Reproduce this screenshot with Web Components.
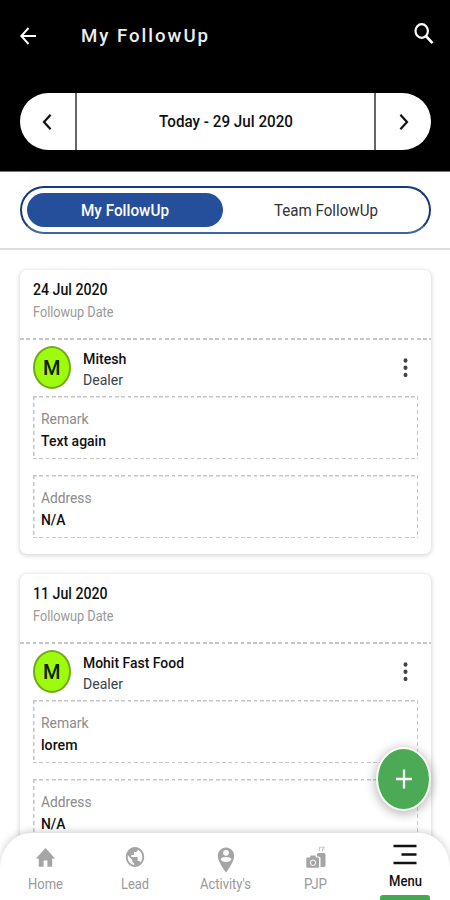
<!DOCTYPE html>
<html lang="en">
<head>
<meta charset="utf-8">
<title>My FollowUp</title>
<style>
html,body{margin:0;height:900px;overflow:hidden;background:#fff}
body{font-family:Roboto,"Liberation Sans",sans-serif;color:#111}
</style>
</head>
<body>
<follow-app></follow-app>
<script>
const define = (name, html, setup) => customElements.define(name, class extends HTMLElement {
  connectedCallback() {
    if (this.shadowRoot) return;
    const t = document.createElement('template');
    t.innerHTML = typeof html === 'function' ? html(this) : html;
    this.attachShadow({ mode: 'open' }).append(t.content.cloneNode(true));
    if (setup) setup(this);
  }
});

// Text condensed horizontally to occupy the width given in "w".
define('fit-text', el => `
<style>
:host{display:block;flex:none;width:${el.getAttribute('w')}px;height:20px;line-height:20px;white-space:nowrap;font-size:16px}
span{display:inline-block;transform-origin:0 50%}
</style><span>${el.getAttribute('text')}</span>`, el => {
  const s = el.shadowRoot.querySelector('span');
  s.style.transform = `scaleX(${parseFloat(el.getAttribute('w')) / s.getBoundingClientRect().width})`;
});

define('app-header', `
<style>
:host{display:flex;flex-direction:column;height:171px;background:#000;color:#fff;border-bottom:1px solid #777;box-sizing:content-box}
.bar{display:flex;align-items:center;height:72px;padding:0 15px 0 19px;box-sizing:border-box}
.bar fit-text{font-size:19px;font-weight:500;letter-spacing:2px;margin-left:43px;color:#eee}
.search{margin-left:auto;margin-top:-5px}
svg{display:block;flex:none}
.bar svg:first-child{margin-top:-1px}
.pill{display:flex;align-items:center;margin:21px 19px 0 20px;height:57px;border-radius:29px;background:#fff;color:#111}
.side{width:55px;display:flex;justify-content:center}
.side:first-child svg{margin-right:1px}
.mid{flex:1;height:100%;display:flex;align-items:center;justify-content:center;border-left:2px solid #666;border-right:2px solid #666}
.mid fit-text{font-size:16.5px;font-weight:500;margin-top:1px}
</style>
<div class="bar">
 <svg width="19" height="20" viewBox="0 0 19 20" fill="none" stroke="#fff" stroke-width="1.9"><path d="M17 10H2.5M9.5 2 2.3 10l7.2 8"/></svg>
 <fit-text w="129" text="My FollowUp"></fit-text>
 <svg class="search" width="22" height="24" viewBox="0 0 22 24" fill="none" stroke="#fff"><ellipse cx="8.7" cy="9" rx="6.2" ry="6.8" stroke-width="2.2"/><path d="m13.2 14.3 6.4 6.900" stroke-width="2.7"/></svg>
</div>
<div class="pill">
 <div class="side"><svg width="10" height="18" viewBox="0 0 10 18" fill="none" stroke="#111" stroke-width="2.2"><path d="M8.6 1.800 2 9l6.600 7.200"/></svg></div>
 <div class="mid"><fit-text w="134" text="Today - 29 Jul 2020"></fit-text></div>
 <div class="side"><svg width="10" height="18" viewBox="0 0 10 18" fill="none" stroke="#111" stroke-width="2.2"><path d="m1.400 1.800 6.600 7.200-6.600 7.200"/></svg></div>
</div>`);

define('view-tabs', `
<style>
:host{display:block;padding:14px 19px 14px 20px;border-bottom:2px solid #dedede;height:48px}
.tabs{display:flex;box-sizing:border-box;height:48px;border:2px solid #14397f;border-bottom-color:#3d65a3;border-radius:24px;padding:5px}
.tab{flex:1;display:flex;align-items:center;justify-content:center;border-radius:17px;color:#333;padding-top:1px}
.tab.on{flex:0 0 196px;background:#254f9a;color:#fff;font-weight:500}
.tab:last-child{padding-left:5px}
</style>
<div class="tabs"><div class="tab on"><fit-text w="88" text="My FollowUp"></fit-text></div><div class="tab"><fit-text w="104" text="Team FollowUp"></fit-text></div></div>`);

define('info-box', `
<style>
:host{display:block;box-sizing:border-box;height:63px;padding:13px 0 0 7.500px;margin:0 13px 16px}
:host{background:
 repeating-linear-gradient(90deg,#c6c6c6 0 3.8px,transparent 3.8px 6.3px) 0 0/100% 1.5px no-repeat,
 repeating-linear-gradient(90deg,#c6c6c6 0 3.8px,transparent 3.8px 6.3px) 0 100%/100% 1.5px no-repeat,
 repeating-linear-gradient(180deg,#c6c6c6 0 4px,transparent 4px 7px) 0 0/1.5px 100% no-repeat,
 repeating-linear-gradient(180deg,#c6c6c6 0 4px,transparent 4px 7px) 100% 0/1.5px 100% no-repeat}
::slotted(.k){font-size:15.5px!important;color:#8b8b8b;margin-bottom:2px}
::slotted(.v){font-size:15.5px!important;color:#111;font-weight:500}
</style><slot></slot>`);

define('follow-card', el => {
  const [date, name, nw, remark, rw] = el.getAttribute('data').split('|');
  return `
<style>
:host{display:block;flex:none;box-sizing:border-box;height:284px;border-radius:7px;background:#fff;box-shadow:0 1px 4px 1px rgba(0,0,0,.15)}
.date{height:68px;box-sizing:border-box;padding:10px 13px 0 12.500px}
.date .d{font-weight:500}
.date .l{font-size:14.5px;color:#999;margin-top:3px}
.rule{height:1.5px;background:repeating-linear-gradient(90deg,#c6c6c6 0 3.8px,transparent 3.8px 6.3px)}
.person{display:flex;height:56.5px;padding:0 22px 0 13px}
.avatar{width:38px;height:43px;margin-top:6.5px;box-sizing:border-box;border:2px solid #73aa1d;border-radius:50%;background:#9ffb0c;display:flex;align-items:center;justify-content:center}
.avatar fit-text{font-size:21px;font-weight:500;color:#102000;margin-top:1px}
.names{margin:9px 0 0 11.500px}
.n{font-weight:500;margin-bottom:1px;font-size:15.5px}
.r{color:#3a4350;font-size:15.5px}
svg{margin:18px 0 0 auto}
</style>
<div class="date"><fit-text class="d" w="74.500" text="${date}"></fit-text><fit-text class="l" w="80.500" text="Followup Date"></fit-text></div>
<div class="rule"></div>
<div class="person">
 <div class="avatar"><fit-text w="17.5" text="M"></fit-text></div>
 <div class="names"><fit-text class="n" w="${nw}" text="${name}"></fit-text><fit-text class="r" w="40" text="Dealer"></fit-text></div>
 <svg width="7" height="20" fill="#444"><ellipse cx="3.5" cy="2.5" rx="2" ry="2.2"/><ellipse cx="3.5" cy="9.700" rx="2" ry="2.2"/><ellipse cx="3.5" cy="16.900" rx="2" ry="2.2"/></svg>
</div>
<info-box><fit-text class="k" w="47.500" text="Remark"></fit-text><fit-text class="v" w="${rw}" text="${remark}"></fit-text></info-box>
<info-box><fit-text class="k" w="50.500" text="Address"></fit-text><fit-text class="v" w="24.500" text="N/A"></fit-text></info-box>`;
});

define('add-button', `
<style>
:host{display:flex;box-sizing:border-box;width:55px;height:64px;border:2.5px solid #f7fff7;border-radius:50%;background:#4caa57;align-items:center;justify-content:center;box-shadow:0 2px 10px 2px rgba(0,0,0,.24)}
</style><svg width="18" height="20" viewBox="0 0 18 20" stroke="#fff" stroke-width="2.3"><path d="M9 .5v19M1 10h16"/></svg>`);

define('nav-item', el => `
<style>
:host{position:relative;display:flex;flex:1;flex-direction:column;align-items:center;color:#999}
:host([on]){color:#111;font-weight:500}
.icon{height:42px;display:flex;align-items:flex-start}
fit-text{font-size:14.5px}
:host([on]) .icon{height:39px}
i{display:none;position:absolute;bottom:0;width:50px;height:5px;border-radius:3px 3px 0 0;background:#43a850}
:host([on]) i{display:block}
</style><div class="icon"><slot></slot></div><fit-text w="${el.getAttribute('w')}" text="${el.getAttribute('label')}"></fit-text><i></i>`);

define('bottom-nav', `
<style>
:host{display:flex;height:67px;background:#fff;border-radius:30px 30px 0 0/36px 36px 0 0;box-shadow:0 -2px 7px rgba(0,0,0,.17)}
svg{display:block;overflow:visible}
</style>
<nav-item label="Home" w="35"><svg style="margin-top:12.5px" width="23" height="25" viewBox="0 0 24 24" preserveAspectRatio="none" fill="#a5a5a5"><path d="M10 20v-6h4v6h5v-8h3L12 2 2 12h3v8z"/></svg></nav-item>
<nav-item label="Lead" w="28"><svg style="margin-top:12px" width="22" height="24" viewBox="0 0 24 24" preserveAspectRatio="none" fill="#a5a5a5"><path d="M12 2C6.48 2 2 6.48 2 12s4.48 10 10 10 10-4.48 10-10S17.52 2 12 2zm-1 17.93c-3.95-.49-7-3.85-7-7.93 0-.62.08-1.21.21-1.79L9 15v1c0 1.1.9 2 2 2v1.93zm6.9-2.54c-.26-.81-1-1.39-1.9-1.39h-1v-3c0-.55-.45-1-1-1H8v-2h2c.55 0 1-.45 1-1V7h2c1.1 0 2-.9 2-2v-.41c2.930 1.19 5 4.060 5 7.410 0 2.080-.8 3.970-2.100 5.390z"/></svg></nav-item>
<nav-item label="Activity's" w="51"><svg style="margin:13.5px 0 0 2px" width="18" height="26" viewBox="0 0 18 26"><path d="M9 .5C4.300.5.800 4.200.800 9c0 6 8.200 16.500 8.200 16.500S17.200 15 17.200 9C17.200 4.200 13.700.5 9 .5z" fill="#a5a5a5"/><circle cx="9" cy="5.800" r="2.900" fill="#fff"/><path d="M3.600 12c.4-2.800 10.400-2.800 10.800 0C13.500 16 4.500 16 3.600 12z" fill="#fff"/></svg></nav-item>
<nav-item label="PJP" w="23"><svg style="margin:13px 0 0 2px" width="20" height="23" viewBox="0 0 20 23" fill="#a5a5a5"><path d="M11 8.500q0-1.500 1.500-1.500h5.500q1.500 0 1.500 1.500v11q0 1.500-1.500 1.500h-3.500V12q0-1.500-2-1.500H11z"/><path d="M13.500 5V1.200h5.500M16.500 5V2.800h2" fill="none" stroke="#c2c2c2"/><path fill-rule="evenodd" d="M1.500 11.500H4l.7-2h4.600l.7 2h1.800q1.200 0 1.200 1.200v7.500q0 1.500-1.200 1.500H1.500Q.3 21.700.3 20.200v-7.500q0-1.200 1.200-1.200zM7 13.400a3.100 3.300 0 1 0 .01 0z"/><ellipse cx="7" cy="16.700" rx="2.100" ry="2.300"/></svg></nav-item>
<nav-item label="Menu" w="33" on><svg style="margin-top:11px" width="24" height="22" fill="none" stroke="#111" stroke-width="2.700"><path d="M.5 2h23M8.500 10.500h15M.5 19h23"/></svg></nav-item>`);

define('follow-app', `
<style>
:host{display:flex;flex-direction:column;position:relative;width:450px;height:900px;overflow:hidden;background:#fff}
app-header,view-tabs{flex:none}
.list{flex:1;min-height:0;display:flex;flex-direction:column;gap:20px;padding:20px 19px 0 20px}
add-button{position:absolute;left:376px;top:747px}
bottom-nav{position:absolute;left:0;right:0;bottom:0}
</style>
<app-header></app-header><view-tabs></view-tabs>
<div class="list">
<follow-card data="24 Jul 2020|Mitesh|43.5|Text again|65"></follow-card>
<follow-card data="11 Jul 2020|Mohit Fast Food|101|lorem|36.5"></follow-card>
</div>
<add-button></add-button><bottom-nav></bottom-nav>`);
</script>
</body>
</html>
